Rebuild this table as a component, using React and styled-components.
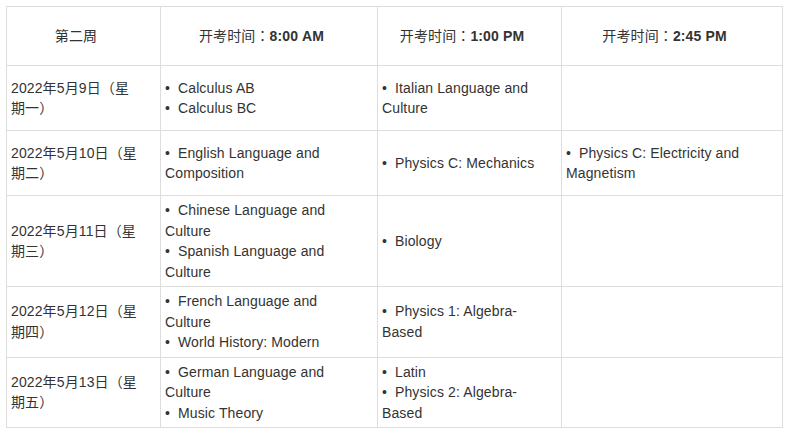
import React from "react"
import styled, { createGlobalStyle } from "styled-components"

const GlobalStyle = createGlobalStyle`
  body {
    margin: 0;
    background: #fff;
    font-family: "Liberation Sans", Arial, "Noto Sans CJK TC", sans-serif;
  }
`

const Page = styled.div`
  padding: 6px;
`

const Table = styled.table`
  width: 776px;
  table-layout: fixed;
  border-collapse: collapse;
  font-size: 14px;
  line-height: 20.5px;
  letter-spacing: 0.12px;
  color: #333;
`

const HeadRow = styled.tr`
  height: 59px;
`

const Row = styled.tr`
  height: 65px;
`

const HeadCell = styled.th`
  box-sizing: border-box;
  border: 1px solid #ddd;
  padding: 4px 19px 4px 4px;
  font-weight: normal;
  text-align: center;
  vertical-align: middle;
  width: ${(props) => props.w}px;

  b {
    font-weight: bold;
  }
`

const Cell = styled.td`
  border: 1px solid #ddd;
  padding: 4px;
  text-align: left;
  vertical-align: middle;
  white-space: pre-line;
`

const Item = styled.div`
  white-space: pre-line;
`

const Bullet = styled.span`
  display: inline-block;
  width: 13px;
`

const weeks = [
  {
    date: "2022年5月9日（星\n期一）",
    am: ["Calculus AB", "Calculus BC"],
    pm: ["Italian Language and\nCulture"],
    late: [],
  },
  {
    date: "2022年5月10日（星\n期二）",
    am: ["English Language and\nComposition"],
    pm: ["Physics C: Mechanics"],
    late: ["Physics C: Electricity and\nMagnetism"],
  },
  {
    date: "2022年5月11日（星\n期三）",
    am: ["Chinese Language and\nCulture", "Spanish Language and\nCulture"],
    pm: ["Biology"],
    late: [],
  },
  {
    date: "2022年5月12日（星\n期四）",
    am: ["French Language and\nCulture", "World History: Modern"],
    pm: ["Physics 1: Algebra-\nBased"],
    late: [],
  },
  {
    date: "2022年5月13日（星\n期五）",
    am: ["German Language and\nCulture", "Music Theory"],
    pm: ["Latin", "Physics 2: Algebra-\nBased"],
    late: [],
  },
]

function Items({ list }) {
  return list.map((text) => (
    <Item key={text}>
      <Bullet>•</Bullet>
      {text}
    </Item>
  ))
}

export default function App() {
  return (
    <Page>
      <GlobalStyle />
      <Table>
        <thead>
          <HeadRow>
            <HeadCell w={154}>第二周</HeadCell>
            <HeadCell w={217}>
              开考时间：<b>8:00 AM</b>
            </HeadCell>
            <HeadCell w={184}>
              开考时间：<b>1:00 PM</b>
            </HeadCell>
            <HeadCell w={221}>
              开考时间：<b>2:45 PM</b>
            </HeadCell>
          </HeadRow>
        </thead>
        <tbody>
          {weeks.map((week) => (
            <Row key={week.date}>
              <Cell>{week.date}</Cell>
              <Cell>
                <Items list={week.am} />
              </Cell>
              <Cell>
                <Items list={week.pm} />
              </Cell>
              <Cell>
                <Items list={week.late} />
              </Cell>
            </Row>
          ))}
        </tbody>
      </Table>
    </Page>
  )
}
